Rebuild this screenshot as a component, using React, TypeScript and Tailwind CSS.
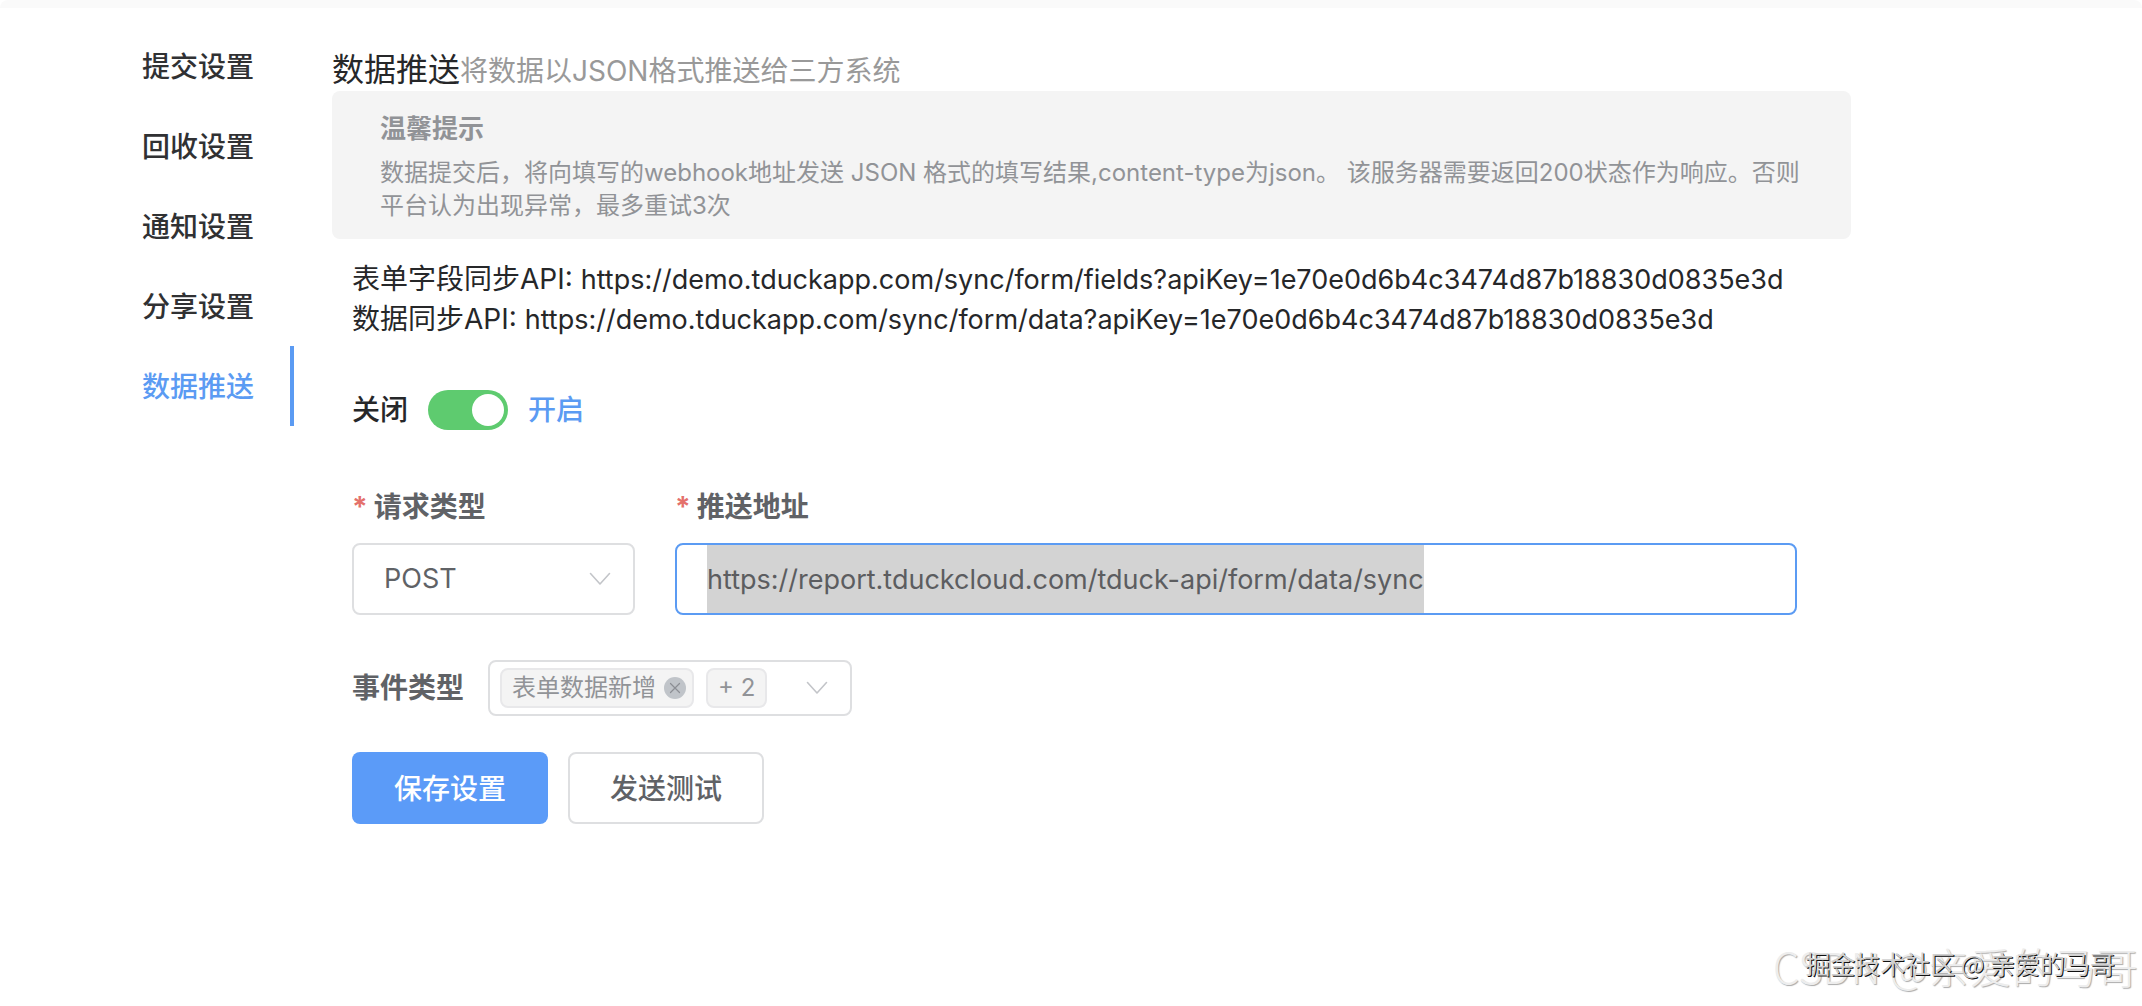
import { useEffect, useRef, useState } from "react";

const menu = ["提交设置", "回收设置", "通知设置", "分享设置", "数据推送"];

function Chevron() {
  return (
    <svg
      aria-hidden="true"
      viewBox="0 0 22 14"
      className="pointer-events-none h-[14px] w-[22px] shrink-0"
      fill="none"
      stroke="#c3c5c9"
      strokeWidth="1.6"
      strokeLinecap="round"
      strokeLinejoin="round"
    >
      <path d="M1.5 1.5 11 12 20.5 1.5" />
    </svg>
  );
}

function Required() {
  return <span className="mr-[6px] text-[#e4716b]">*</span>;
}

export default function App() {
  const urlRef = useRef<HTMLInputElement>(null);
  const [active, setActive] = useState("数据推送");
  const [enabled, setEnabled] = useState(true);

  useEffect(() => {
    urlRef.current?.focus();
    urlRef.current?.select();
  }, []);

  return (
    <div className="relative min-h-screen bg-white font-['Inter','Noto_Sans_CJK_SC',sans-serif] text-[28px] leading-[40px] text-[#262729]">
      <div className="h-2 rounded-t-2xl bg-[#fafafa]" />
      <div className="flex pt-[18px]">
        <nav className="w-[294px] shrink-0">
          {menu.map((item) => (
            <button
              key={item}
              type="button"
              onClick={() => setActive(item)}
              className={
                item === active
                  ? "block h-20 w-full border-r-4 border-[#5b9bf3] pt-[2px] pl-[142px] text-left font-medium text-[#5b9bf3]"
                  : "block h-20 w-full border-r-4 border-transparent pt-[2px] pl-[142px] text-left font-medium text-[#303133]"
              }
            >
              {item}
            </button>
          ))}
        </nav>

        <main className="min-w-0 flex-1 pt-[22px] pr-[291px] pl-[38px]">
          <div className="flex h-[43px] items-baseline">
            <h1 className="text-[32px] leading-[44px]">数据推送</h1>
            <p className="text-[#999]">将数据以JSON格式推送给三方系统</p>
          </div>

          <section className="rounded-lg bg-[#f4f4f4] px-12 pt-[18px] pb-[17px] text-[#919397]">
            <h2 className="text-[26px] font-bold">温馨提示</h2>
            <p className="mt-[7px] text-[24px] leading-[33px]">
              数据提交后，将向填写的webhook地址发送 JSON 格式的填写结果,content-type为json。
              该服务器需要返回200状态作为响应。否则平台认为出现异常，最多重试3次
            </p>
          </section>

          <form className="pr-[54px] pl-5" onSubmit={(e) => e.preventDefault()}>
            <div className="mt-5">
              <p>
                表单字段同步API:{" "}
                <span className="text-[27px] leading-none">
                  https://demo.tduckapp.com/sync/form/fields?apiKey=1e70e0d6b4c3474d87b18830d0835e3d
                </span>
              </p>
              <p>
                数据同步API:{" "}
                <span className="text-[27px] leading-none">
                  https://demo.tduckapp.com/sync/form/data?apiKey=1e70e0d6b4c3474d87b18830d0835e3d
                </span>
              </p>
            </div>

            <div className="mt-[51px] flex items-center gap-5">
              <span className="font-medium">关闭</span>
              <button
                type="button"
                role="switch"
                aria-checked={enabled}
                aria-label="数据推送开关"
                onClick={() => setEnabled(!enabled)}
                className={
                  enabled
                    ? "flex h-10 w-20 justify-end rounded-full bg-[#5ecb6f] p-1"
                    : "flex h-10 w-20 justify-start rounded-full bg-[#dcdfe6] p-1"
                }
              >
                <span className="size-8 rounded-full bg-white" />
              </button>
              <span className="font-medium text-[#5b9bf3]">开启</span>
            </div>

            <div className="mt-[57px] flex gap-10">
              <div className="w-[283px] shrink-0">
                <label htmlFor="method" className="block font-bold text-[#606266]">
                  <Required />
                  请求类型
                </label>
                <div className="mt-4 flex h-[72px] items-center rounded-lg border-2 border-[#dedfe1] pr-[22px]">
                  <select
                    id="method"
                    className="-mr-[22px] h-full flex-1 appearance-none bg-transparent pl-[30px] text-[27px] text-[#606266] outline-none"
                  >
                    <option>POST</option>
                    <option>GET</option>
                  </select>
                  <Chevron />
                </div>
              </div>
              <div className="min-w-0 flex-1">
                <label htmlFor="url" className="block font-bold text-[#606266]">
                  <Required />
                  推送地址
                </label>
                <div className="mt-4 flex h-[72px] rounded-lg border-2 border-[#5b9bf3] px-[30px]">
                  <input
                    id="url"
                    ref={urlRef}
                    defaultValue="https://report.tduckcloud.com/tduck-api/form/data/sync"
                    className="field-sizing-content h-full max-w-full text-[27px] text-[#5c5d60] outline-none selection:bg-[#d3d3d3] selection:text-[#5c5d60] focus:bg-[#d3d3d3]"
                  />
                </div>
              </div>
            </div>

            <div className="mt-[45px] flex items-center">
              <span id="events" className="w-[136px] font-bold text-[#606266]">
                事件类型
              </span>
              <div
                role="group"
                aria-labelledby="events"
                className="flex h-14 w-[364px] items-center rounded-lg border-2 border-[#dedfe1] pr-[22px] pl-[10px] text-[24px] text-[#919397]"
              >
                <span className="flex h-10 items-center gap-2 rounded-lg border-2 border-[#e8e8ea] bg-[#f4f4f4] pr-[6px] pl-[10px]">
                  表单数据新增
                  <button
                    type="button"
                    aria-label="移除 表单数据新增"
                    className="flex size-[22px] items-center justify-center rounded-full bg-[#c0c4c9]"
                  >
                    <svg viewBox="0 0 12 12" className="size-3" stroke="#8b8e94" strokeWidth="1.2" strokeLinecap="round">
                      <path d="M1.5 1.5 10.5 10.5M10.5 1.5 1.5 10.5" />
                    </svg>
                  </button>
                </span>
                <span className="ml-3 flex h-10 items-center rounded-lg border-2 border-[#e8e8ea] bg-[#f4f4f4] px-[10px]">
                  + 2
                </span>
                <button type="button" aria-label="展开事件类型" className="ml-auto">
                  <Chevron />
                </button>
              </div>
            </div>

            <div className="mt-9 flex gap-5 font-medium">
              <button type="submit" className="h-[72px] w-[196px] rounded-lg bg-[#5b9bf8] pt-[2px] text-white">
                保存设置
              </button>
              <button
                type="button"
                className="h-[72px] w-[196px] rounded-lg border-2 border-[#dedfe1] bg-white pt-[2px] text-[#606266]"
              >
                发送测试
              </button>
            </div>
          </form>
        </main>
      </div>

      <p className="absolute right-1 bottom-3 font-['Noto_Sans_CJK_SC',sans-serif] text-[42px] leading-[56px] font-light whitespace-nowrap text-[#ededed] [text-shadow:1px_1px_1px_#aaa]">
        CSDN @亲爱的马哥
      </p>
      <p className="absolute right-[27px] bottom-[23px] font-['Noto_Sans_CJK_SC',sans-serif] text-[25px] whitespace-nowrap text-[#d0d0d0] [text-shadow:1px_1px_0_#111]">
        掘金技术社区 @ 亲爱的马哥
      </p>
    </div>
  );
}
